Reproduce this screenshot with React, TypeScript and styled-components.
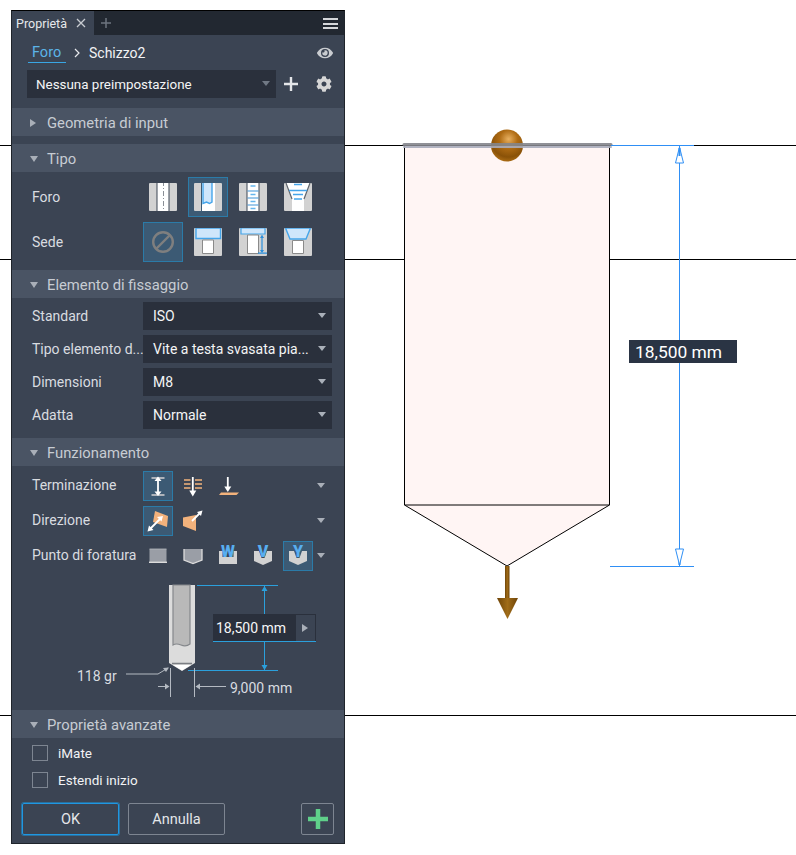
import { ReactNode } from "react";
import styled, { createGlobalStyle } from "styled-components";
import { FaCog, FaEye } from "react-icons/fa";

const GRAY = "#d2d2d2";
const BLUE = "#45a5ea";
const PALE = "#cfe6fb";
const ORANGE = "#f2b27c";
const ARROW = "#ffffff";

const Hole = ({ children }: { children: ReactNode }) => (
  <svg width="28" height="28" viewBox="0 0 28 28">
    {children}
  </svg>
);

const Sides = () => (
  <>
    <path d="M1 0h6.500v28H1a1 1 0 0 1-1-1V1a1 1 0 0 1 1-1z" fill={GRAY} />
    <path d="M20.500 0H27a1 1 0 0 1 1 1v26a1 1 0 0 1-1 1h-6.500z" fill={GRAY} />
    <rect x="8.500" width="11" height="28" fill="#fff" />
  </>
);

const Block = () => <rect width="28" height="28" rx="1" fill={GRAY} />;

const Bore = ({ top }: { top: number }) => (
  <path d={`M8.500 ${top}H19.500V25.500H8.500z`} fill="#fff" stroke="#8a8a8a" />
);

const HoleIcons = {
  simple: (
    <Hole>
      <Sides />
      <path d="M14.500 -2V30" stroke="#8a8f96" strokeDasharray="5 2 1 2" />
    </Hole>
  ),
  clearance: (
    <Hole>
      <path d="M1 0h6v28H1a1 1 0 0 1-1-1V1a1 1 0 0 1 1-1z" fill={GRAY} />
      <path d="M21 0h6a1 1 0 0 1 1 1v26a1 1 0 0 1-1 1h-6z" fill={GRAY} />
      <rect x="8" width="13" height="28" fill="#fff" />
      <path d="M9 -1V20.500l3.500 -1.500 3 1.500 2.500 -1.500V-1z" fill={PALE} stroke={BLUE} strokeWidth="1.400" />
    </Hole>
  ),
  tapped: (
    <Hole>
      <Sides />
      <path d="M8.500 8h11M8.500 15h11M8.500 22h11" stroke="#3f93d8" strokeWidth="1.100" />
      <path d="M11.500 3h5M11.500 11.500h5M11.500 18.500h5M11.500 25.500h5" stroke="#66b6ee" strokeWidth="1.600" />
    </Hole>
  ),
  taper: (
    <Hole>
      <Block />
      <path d="M2 0h24l-6 16v12H8V16z" fill="#fff" />
      <path d="M2 0l6 16M26 0l-6 16" stroke="#5f656d" strokeWidth="1.200" />
      <path d="M10 1.500h8M5 7.500h18M9 11.500h10M10 16h8" stroke={BLUE} strokeWidth="1.300" />
    </Hole>
  ),
  none: (
    <svg width="24" height="24" viewBox="0 0 24 24">
      <circle cx="12" cy="12" r="9.800" fill="none" stroke="#7f7f7f" strokeWidth="2.400" />
      <path d="M5.500 18.500L18.500 5.500" stroke="#7f7f7f" strokeWidth="2.400" />
    </svg>
  ),
  counterbore: (
    <Hole>
      <Block />
      <path d="M2 0V10.500H26.500V0z" fill={PALE} stroke={BLUE} strokeWidth="1.400" />
      <Bore top={12} />
    </Hole>
  ),
  spotface: (
    <Hole>
      <Block />
      <path d="M2 0V6H26V0z" fill={PALE} stroke={BLUE} strokeWidth="1.200" />
      <Bore top={7} />
      <path d="M23 7.500V24M19 25.200H28" stroke="#2b8fdc" strokeWidth="1.200" />
      <path d="M23 7l-2 3h4zM23 25l-2 -3h4z" fill="#2b8fdc" />
    </Hole>
  ),
  countersink: (
    <Hole>
      <Block />
      <path d="M1.500 0h25l-4.500 11H6z" fill={PALE} stroke={BLUE} strokeWidth="1.400" />
      <Bore top={12.500} />
    </Hole>
  ),
};

const SmallIcon = ({ children }: { children: ReactNode }) => (
  <svg width="24" height="24" viewBox="0 0 24 24">
    {children}
  </svg>
);

// taller canvas, so the letter has room above the block
const LetterIcon = ({ letter, children }: { letter: string; children: ReactNode }) => (
  <svg width="24" height="28" viewBox="0 -2 24 28">
    {children}
    <text x="12" y="13" textAnchor="middle" fontFamily="Roboto, sans-serif" fontWeight="900" fontSize="16" fill="#58aef0">
      {letter}
    </text>
  </svg>
);

const TermIcons = {
  distance: (
    <SmallIcon>
      <path d="M5.500 3h13v2h-13zM5.500 20h13v2h-13z" fill="#aeb3ba" />
      <path d="M12 5v14" stroke={ARROW} strokeWidth="1.800" />
      <path d="M12 2.500l-3.500 4.500h7zM12 22l-3.500 -4.500h7z" fill={ARROW} />
    </SmallIcon>
  ),
  throughAll: (
    <SmallIcon>
      <path d="M3 6h6.500M3 10h6.500M3 14h6.500M14 6h7M14 10h7M14 14h7" stroke={ORANGE} strokeWidth="1.500" />
      <path d="M11.800 3v14" stroke={ARROW} strokeWidth="1.800" />
      <path d="M11.800 22.500l-3.500 -6h7z" fill={ARROW} />
    </SmallIcon>
  ),
  toPlane: (
    <SmallIcon>
      <path d="M11.800 3v10" stroke={ARROW} strokeWidth="1.800" />
      <path d="M11.800 18l-3.500 -5.500h7z" fill={ARROW} />
      <path d="M5 18.500h18l-2.500 2.500H3z" fill={ORANGE} />
    </SmallIcon>
  ),
};

const DirIcons = {
  flip: (
    <SmallIcon>
      <path d="M9 2L22 7L21 18L7 13z" fill={ORANGE} />
      <path d="M3.500 20.500L15 9" stroke={ARROW} strokeWidth="1.800" />
      <path d="M1.500 22.500l1.500 -6 4.500 4.500zM17 7l-1.500 5.500 -4.500 -4.500z" fill={ARROW} />
    </SmallIcon>
  ),
  normal: (
    <SmallIcon>
      <path d="M2 8.500L15 6V22L2 17z" fill={ORANGE} />
      <path d="M11 12L19.500 3.500" stroke={ARROW} strokeWidth="1.800" />
      <path d="M21.500 1.500l-1.500 5.500 -4 -4z" fill={ARROW} />
    </SmallIcon>
  ),
};

const TipIcons = {
  flat: (
    <SmallIcon>
      <rect x="3.500" y="5" width="17" height="13" fill="#9a9ea6" />
      <path d="M3 18.300h18" stroke="#dcdcdc" strokeWidth="1.400" />
      <path d="M3.500 5h17" stroke="#b5b8bd" strokeWidth="0.800" />
    </SmallIcon>
  ),
  angled: (
    <SmallIcon>
      <path d="M3 5h18V16l-9 3.500L3 16z" fill="#9a9ea6" />
      <path d="M3 5V16l9 3.500L21 16V5" fill="none" stroke="#dcdcdc" strokeWidth="1.300" />
    </SmallIcon>
  ),
  w: (
    <LetterIcon letter="W">
      <path d="M3 7h3.500v6h11V7H21v13H3z" fill={GRAY} />
    </LetterIcon>
  ),
  v: (
    <LetterIcon letter="V">
      <path d="M3 7h5l2.500 7h3L16 7h5v10l-9 4-9-4z" fill={GRAY} />
    </LetterIcon>
  ),
  y: (
    <LetterIcon letter="Y">
      <path d="M3 7h5l2.500 7h3L16 7h5v10l-9 4-9-4z" fill={GRAY} />
    </LetterIcon>
  ),
};

const App = () => {
  return (
    <>
      <GlobalStyle />
      <Canvas>
        <Drawing />
        <DimensionLabel>18,500 mm</DimensionLabel>
        <Panel>
          <TabBar>
            <Tab>
              Proprietà
              <svg width="10" height="10" viewBox="0 0 10 10">
                <path d="M1 1l8 8M9 1L1 9" stroke="#c8ccd2" strokeWidth="1.300" />
              </svg>
            </Tab>
            <AddTab>
              <svg width="10" height="10" viewBox="0 0 10 10">
                <path d="M5 0v10M0 5h10" stroke="#6d747f" strokeWidth="1.500" />
              </svg>
            </AddTab>
            <Burger />
          </TabBar>

          <Crumbs>
            <CrumbLink>Foro</CrumbLink>
            <svg width="8" height="10" viewBox="0 0 8 10">
              <path d="M2 1l4 4-4 4" fill="none" stroke="#e8eaed" strokeWidth="1.200" />
            </svg>
            <Crumb>Schizzo2</Crumb>
            <EyeWrap>
              <FaEye size={16} color="#c9ccd0" />
            </EyeWrap>
          </Crumbs>

          <PresetRow>
            <Select $width={249} $size={13.400}>
              Nessuna preimpostazione
              <Caret $muted />
            </Select>
            <PresetButton>
              <svg width="14" height="14" viewBox="0 0 14 14">
                <path d="M7 0v14M0 7h14" stroke="#e4e6e9" strokeWidth="2.400" />
              </svg>
            </PresetButton>
            <PresetButton>
              <FaCog size={16} color="#d6d6d6" />
            </PresetButton>
          </PresetRow>

          <SectionHeader $top={10}>
            <Triangle $closed />
            Geometria di input
          </SectionHeader>

          <SectionHeader $top={8}>
            <Triangle />
            Tipo
          </SectionHeader>
          <SectionBody $top={5} $bottom={8}>
            <Row>
              <RowLabel>Foro</RowLabel>
              <IconGroup>
                <IconCell $size={40}>{HoleIcons.simple}</IconCell>
                <IconCell $size={40} $active>{HoleIcons.clearance}</IconCell>
                <IconCell $size={40}>{HoleIcons.tapped}</IconCell>
                <IconCell $size={40}>{HoleIcons.taper}</IconCell>
              </IconGroup>
            </Row>
            <Row>
              <RowLabel>Sede</RowLabel>
              <IconGroup>
                <IconCell $size={40} $active>{HoleIcons.none}</IconCell>
                <IconCell $size={40}>{HoleIcons.counterbore}</IconCell>
                <IconCell $size={40}>{HoleIcons.spotface}</IconCell>
                <IconCell $size={40}>{HoleIcons.countersink}</IconCell>
              </IconGroup>
            </Row>
          </SectionBody>

          <SectionHeader>
            <Triangle />
            Elemento di fissaggio
          </SectionHeader>
          <SectionBody $top={4} $bottom={9}>
            <Row>
              <RowLabel>Standard</RowLabel>
              <Select $width={189} $small>
                ISO
                <Caret />
              </Select>
            </Row>
            <Row>
              <RowLabel>Tipo elemento d...</RowLabel>
              <Select $width={189} $small>
                Vite a testa svasata pia...
                <Caret />
              </Select>
            </Row>
            <Row>
              <RowLabel>Dimensioni</RowLabel>
              <Select $width={189} $small>
                M8
                <Caret />
              </Select>
            </Row>
            <Row>
              <RowLabel>Adatta</RowLabel>
              <Select $width={189} $small>
                Normale
                <Caret />
              </Select>
            </Row>
          </SectionBody>

          <SectionHeader>
            <Triangle />
            Funzionamento
          </SectionHeader>
          <SectionBody $top={5} $bottom={4}>
            <Row>
              <RowLabel $raised>Terminazione</RowLabel>
              <IconGroup>
                <IconCell $size={30} $active>{TermIcons.distance}</IconCell>
                <IconCell $size={30}>{TermIcons.throughAll}</IconCell>
                <IconCell $size={30}>{TermIcons.toPlane}</IconCell>
              </IconGroup>
              <RowCaret />
            </Row>
            <Row>
              <RowLabel $raised>Direzione</RowLabel>
              <IconGroup>
                <IconCell $size={30} $active>{DirIcons.flip}</IconCell>
                <IconCell $size={30}>{DirIcons.normal}</IconCell>
              </IconGroup>
              <RowCaret />
            </Row>
            <Row>
              <RowLabel $raised>Punto di foratura</RowLabel>
              <IconGroup>
                <IconCell $size={30}>{TipIcons.flat}</IconCell>
                <IconCell $size={30}>{TipIcons.angled}</IconCell>
                <IconCell $size={30}>{TipIcons.w}</IconCell>
                <IconCell $size={30}>{TipIcons.v}</IconCell>
                <IconCell $size={30} $active>{TipIcons.y}</IconCell>
              </IconGroup>
              <RowCaret />
            </Row>
          </SectionBody>

          <Diagram>
            <DrillSketch />
            <DepthInput>
              <DepthValue>18,500 mm</DepthValue>
              <DepthFlyout>
                <Triangle $closed />
              </DepthFlyout>
            </DepthInput>
            <AngleLabel>118 gr</AngleLabel>
            <DiameterLabel>9,000 mm</DiameterLabel>
          </Diagram>

          <SectionHeader>
            <Triangle />
            Proprietà avanzate
          </SectionHeader>
          <CheckList>
            <CheckRow>
              <CheckBox />
              iMate
            </CheckRow>
            <CheckRow>
              <CheckBox />
              Estendi inizio
            </CheckRow>
          </CheckList>

          <Footer>
            <Button $primary>OK</Button>
            <Button>Annulla</Button>
            <ApplyButton>
              <svg width="20" height="20" viewBox="0 0 20 20">
                <path d="M10 0v20M0 10h20" stroke="#5fd08a" strokeWidth="4.500" />
              </svg>
            </ApplyButton>
          </Footer>
        </Panel>
      </Canvas>
    </>
  );
};

export default App;

// the model view behind the panel
const Drawing = () => (
  <ModelView width="796" height="855" viewBox="0 0 796 855">
    <defs>
      <radialGradient id="ball" cx="0.55" cy="0.3" r="0.8">
        <stop offset="0" stopColor="#e8b060" />
        <stop offset="0.35" stopColor="#b06c14" />
        <stop offset="0.7" stopColor="#8a5208" />
        <stop offset="1" stopColor="#c07c1c" />
      </radialGradient>
      <linearGradient id="shaft" x1="0" x2="1" y1="0" y2="0">
        <stop offset="0" stopColor="#6e4408" />
        <stop offset="0.5" stopColor="#a06c18" />
        <stop offset="1" stopColor="#6e4408" />
      </linearGradient>
    </defs>
    <path d="M0 145.500H796M0 259.500H796M0 715.500H796" stroke="#000" />
    <path d="M404.500 146V505L507 566L609.500 505V146z" fill="#fff5f4" />
    <path d="M404.500 146V505H609.500V146M404.500 505L507 566L609.500 505" fill="none" stroke="#000" />
    <circle cx="507" cy="145.500" r="16" fill="url(#ball)" />
    <path d="M404 144.500H611" stroke="#84868c" strokeWidth="3" strokeLinecap="round" opacity="0.9" />
    <path d="M404 147H611" stroke="#a9acbc" strokeWidth="2" strokeLinecap="round" opacity="0.9" />
    <path d="M611 145.500H694M610 566.500H694M679.500 146V566" stroke="#2f8ff5" fill="none" />
    <path d="M679.500 147L683.500 163H675.500z" fill="#fff" stroke="#2f8ff5" />
    <path d="M679.500 148V156M679.500 557V565" stroke="#2f8ff5" strokeWidth="2" />
    <path d="M679.500 565L683.500 549H675.500z" fill="#fff" stroke="#2f8ff5" />
    <rect x="505" y="566" width="4.500" height="34" fill="url(#shaft)" />
    <path d="M497 598H518L507.500 619z" fill="url(#shaft)" />
  </ModelView>
);

// drawn in page coordinates, shifted by the viewBox
const DrillSketch = () => (
  <svg width="332" height="135" viewBox="12 575 332 135">
    <path d="M169 585H195V663L182 671L169 663z" fill="#dcdcdc" />
    <path d="M173 585H190V644Q186 647 181 645T173 645z" fill="#b9b9b9" stroke="#85888c" strokeWidth="1.200" />
    <path d="M172 663.500H192" stroke="#7b7e83" strokeWidth="1.500" />
    <path d="M173 665H191L182 670.500z" fill="#fff" />
    <path d="M197 585.500H278M188 670.500H278M264.500 586V614M264.500 642V670" stroke="#2ba0dc" fill="none" />
    <path d="M264.500 586L261.500 591H267.500zM264.500 670L261.500 665H267.500z" fill="#2ba0dc" />
    <path d="M170.500 668V697M194.500 668V697M126 674H158L168 668M158 686.500H168M196 686.500H226" stroke="#b4bac2" fill="none" />
    <path d="M169.500 686.500L165 683.500V689.500zM195.500 686.500L200 683.500V689.500zM169 667.500L163 668L166 672z" fill="#b4bac2" />
  </svg>
);

const GlobalStyle = createGlobalStyle`
  html, body {
    margin: 0;
    background: #fff;
    font-family: "Roboto", "Liberation Sans", sans-serif;
  }
`;

const Canvas = styled.div`
  position: relative;
  width: 796px;
  height: 855px;
  padding: 10px 0 0 11px;
  box-sizing: border-box;
  overflow: hidden;
`;

const ModelView = styled.svg`
  position: absolute;
  left: 0;
  top: 0;
`;

const DimensionLabel = styled.div`
  position: absolute;
  left: 629px;
  top: 340px;
  width: 108px;
  height: 23px;
  padding-left: 6px;
  box-sizing: border-box;
  background: #2a3444;
  color: #fff;
  font-size: 17.400px;
  line-height: 25px;
`;

const Panel = styled.div`
  position: relative;
  width: 334px;
  height: 834px;
  box-sizing: border-box;
  background: #3b4453;
  border: 1px solid #1f242b;
  border-top-color: #000;
  color: #f2f3f5;
  font-size: 14px;
`;

const TabBar = styled.div`
  display: flex;
  align-items: stretch;
  height: 24px;
  background: #222831;
`;

const Tab = styled.div`
  display: flex;
  align-items: center;
  gap: 9px;
  width: 82px;
  padding-left: 4px;
  box-sizing: border-box;
  background: #3b4453;
  font-size: 12.500px;
  color: #e6e8eb;
`;

const AddTab = styled.div`
  display: flex;
  align-items: center;
  padding-left: 7px;
`;

const Burger = styled.div`
  width: 15px;
  height: 11px;
  margin: 7px 6px 0 auto;
  border-top: 2px solid #d5d7da;
  border-bottom: 2px solid #d5d7da;
  box-sizing: border-box;
  position: relative;

  &::after {
    content: "";
    position: absolute;
    left: 0;
    right: 0;
    top: 2.500px;
    height: 2px;
    background: #d5d7da;
  }
`;

const Crumbs = styled.div`
  display: flex;
  align-items: center;
  gap: 7px;
  height: 35px;
  padding: 1px 11px 0 16px;
  box-sizing: border-box;
`;

const CrumbLink = styled.span`
  width: 38px;
  padding: 0 0 0 4px;
  box-sizing: border-box;
  border-bottom: 1px solid #39a6e4;
  color: #5cb4e8;
  font-size: 14.500px;
  line-height: 18px;
`;

const Crumb = styled.span`
  margin-left: 1px;
  font-size: 14px;
  color: #f2f3f5;
`;

const EyeWrap = styled.span`
  display: flex;
  margin-left: auto;
`;

const PresetRow = styled.div`
  display: flex;
  align-items: center;
  padding-left: 15px;
`;

const PresetButton = styled.div`
  display: flex;
  align-items: center;
  justify-content: center;
  width: 17px;
  margin-left: 6px;

  & + & {
    margin-left: 16px;
  }
`;

const Select = styled.div<{ $width: number; $small?: boolean; $size?: number }>`
  position: relative;
  display: flex;
  align-items: center;
  width: ${(p) => p.$width}px;
  height: 28px;
  padding-left: ${(p) => (p.$small ? 10 : 9)}px;
  box-sizing: border-box;
  background: #2a303c;
  color: #f4f5f6;
  font-size: ${(p) => p.$size ?? 14}px;
  white-space: nowrap;
`;

const Caret = styled.span<{ $muted?: boolean }>`
  position: absolute;
  right: 6px;
  top: 11px;
  border-left: 4px solid transparent;
  border-right: 4px solid transparent;
  border-top: 5px solid ${(p) => (p.$muted ? "#717985" : "#aab0b9")};
`;

const SectionHeader = styled.div<{ $top?: number }>`
  display: flex;
  align-items: center;
  gap: 9px;
  height: 28px;
  margin-top: ${(p) => p.$top ?? 0}px;
  padding: 1px 0 0 18px;
  box-sizing: border-box;
  background: #4a5464;
  color: #c7ccd3;
  font-size: 14.800px;
`;

const Triangle = styled.span<{ $closed?: boolean }>`
  display: inline-block;
  width: 0;
  height: 0;
  ${(p) =>
    p.$closed
      ? `border-top: 4px solid transparent;
         border-bottom: 4px solid transparent;
         border-left: 6px solid #a9afb8;
         margin-right: 2px;`
      : `border-left: 4px solid transparent;
         border-right: 4px solid transparent;
         border-top: 6px solid #a9afb8;`}
`;

const SectionBody = styled.div<{ $top: number; $bottom: number }>`
  display: flex;
  flex-direction: column;
  gap: 5px;
  padding: ${(p) => p.$top}px 0 ${(p) => p.$bottom}px;
`;

const Row = styled.div`
  display: flex;
  align-items: center;
  padding-left: 20px;
`;

const RowLabel = styled.div<{ $raised?: boolean }>`
  width: 111px;
  flex: none;
  margin-bottom: ${(p) => (p.$raised ? 2 : 0)}px;
  color: #d9dce0;
  font-size: 14px;
  white-space: nowrap;
`;

const IconGroup = styled.div`
  display: flex;
  gap: 5px;
`;

const IconCell = styled.div<{ $size: number; $active?: boolean }>`
  display: flex;
  align-items: center;
  justify-content: center;
  width: ${(p) => p.$size}px;
  height: ${(p) => p.$size}px;
  box-sizing: border-box;
  border: 1px solid ${(p) => (p.$active ? "#2b7ba8" : "transparent")};
  background: ${(p) => (p.$active ? "#3c5a74" : "transparent")};
`;

const RowCaret = styled.span`
  margin: 0 19px 1px auto;
  border-left: 4px solid transparent;
  border-right: 4px solid transparent;
  border-top: 5px solid #a9afb8;
`;

const Diagram = styled.div`
  position: relative;
  height: 135px;

  svg {
    display: block;
  }
`;

const DepthInput = styled.div`
  position: absolute;
  left: 201px;
  top: 39px;
  display: flex;
  width: 103px;
  height: 28px;
  box-sizing: border-box;
  background: #2a303c;
  border-bottom: 1px solid #2ba0dc;
`;

const DepthValue = styled.div`
  flex: 1;
  padding-left: 3px;
  color: #f6f7f8;
  font-size: 14px;
  line-height: 29px;
`;

const DepthFlyout = styled.div`
  display: flex;
  align-items: center;
  justify-content: center;
  width: 21px;
  background: #3b4453;
  border: 1px solid #2a303c;
  border-bottom: none;
  box-sizing: border-box;
`;

const AngleLabel = styled.div`
  position: absolute;
  left: 65px;
  top: 93px;
  color: #d9dce0;
  font-size: 14px;
`;

const DiameterLabel = styled.div`
  position: absolute;
  left: 218px;
  top: 105px;
  color: #d9dce0;
  font-size: 14px;
`;

const CheckList = styled.div`
  display: flex;
  flex-direction: column;
  gap: 1px;
  padding: 2px 0 0 20px;
`;

const CheckRow = styled.label`
  display: flex;
  align-items: center;
  gap: 10px;
  height: 26px;
  color: #f2f3f5;
  font-size: 13.500px;
`;

const CheckBox = styled.span`
  width: 16px;
  height: 16px;
  box-sizing: border-box;
  border: 1px solid #7d8591;
`;

const Footer = styled.div`
  display: flex;
  gap: 9px;
  margin-top: 10px;
  padding: 0 10px;
`;

const Button = styled.div<{ $primary?: boolean }>`
  display: flex;
  align-items: center;
  justify-content: center;
  width: 97px;
  height: 32px;
  box-sizing: border-box;
  border-radius: 2px;
  border: 1px solid ${(p) => (p.$primary ? "#1f97e2" : "#7d8591")};
  box-shadow: ${(p) => (p.$primary ? "0 0 0 1px #2a6f9c" : "none")};
  color: #e4e6e9;
  font-size: 14.500px;
`;

const ApplyButton = styled.div`
  display: flex;
  align-items: center;
  justify-content: center;
  width: 33px;
  height: 32px;
  margin-left: auto;
  box-sizing: border-box;
  border-radius: 2px;
  border: 1px solid #7d8591;
`;
